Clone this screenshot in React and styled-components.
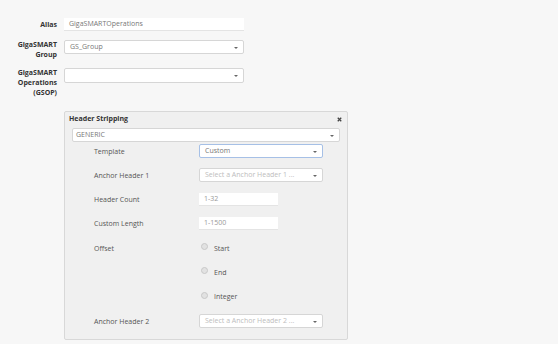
import React from "react";
import styled, { createGlobalStyle } from "styled-components";

const Global = createGlobalStyle`
  html, body { margin: 0; padding: 0; background: #f7f7f7; }
  body { font-family: "Open Sans", "Liberation Sans", sans-serif; font-size: 7px; color: #555; }
`;

const Page = styled.div`
  width: 558px;
  height: 344px;
  padding-top: 18px;
  box-sizing: border-box;
  overflow: hidden;
`;

const TopRow = styled.div`
  display: flex;
  align-items: flex-start;
  margin-bottom: ${(p) => p.$mb || 0}px;
`;

const TopLabel = styled.div`
  width: 40px;
  margin-left: 17px;
  margin-right: 7px;
  text-align: right;
  font-weight: 700;
  color: #333;
  line-height: ${(p) => p.$lh || 10}px;
`;

const TextInput = styled.div`
  width: ${(p) => p.$w}px;
  height: ${(p) => p.$h || 13}px;
  box-sizing: border-box;
  background: #fff;
  border-bottom: 1px solid #e4e4e4;
  padding-left: 5px;
  line-height: ${(p) => (p.$h || 13) - 1}px;
  color: ${(p) => (p.$muted ? "#999" : "#777")};
  white-space: nowrap;
`;

const SelectBox = styled.div`
  width: ${(p) => p.$w}px;
  height: ${(p) => p.$h || 14}px;
  box-sizing: border-box;
  background: #fff;
  border: 1px solid ${(p) => (p.$focus ? "#a6c0e6" : "#d6d6d6")};
  border-radius: 2px;
  display: flex;
  align-items: center;
  justify-content: space-between;
  padding: 0 5px 0 ${(p) => p.$pl || 4}px;
  color: ${(p) => (p.$placeholder ? "#bdbdbd" : "#777")};
  white-space: nowrap;
  line-height: 12px;
`;

const Caret = styled.span`
  width: 0;
  height: 0;
  border-left: 2px solid transparent;
  border-right: 2px solid transparent;
  border-top: 2px solid #666;
  margin-top: 1px;
`;

const Select = ({ w, h, value, placeholder, focus, pl }) => (
  <SelectBox $w={w} $h={h} $placeholder={!!placeholder} $focus={focus} $pl={pl}>
    <span>{value || placeholder || ""}</span>
    <Caret />
  </SelectBox>
);

const Panel = styled.div`
  margin: 13px 0 0 64px;
  width: 284px;
  box-sizing: border-box;
  background: #f0f0f0;
  border: 1px solid #d8d8d8;
  border-radius: 2px;
  padding: 2px 2px 11px;
`;

const PanelHeader = styled.div`
  display: flex;
  justify-content: space-between;
  align-items: center;
  padding: 0 3px 0 2px;
  line-height: 10px;
  font-weight: 700;
  color: #333;
`;

const Close = styled.svg`
  width: 5px;
  height: 5px;
  display: block;
`;

const GenericWrap = styled.div`
  margin: 4px 5px 0;
`;

const Form = styled.div`
  display: flex;
  flex-direction: column;
  gap: 10.3px;
  margin-top: 2px;
`;

const Row = styled.div`
  display: flex;
  align-items: center;
  min-height: 14px;
`;

const FieldLabel = styled.div`
  width: 105px;
  margin-left: 27px;
  color: #555;
`;

const RadioOpt = styled.div`
  display: flex;
  align-items: center;
  gap: 6px;
  padding-left: 2px;
  color: #555;
`;

const RadioDot = styled.span`
  width: 5px;
  height: 5px;
  border-radius: 50%;
  background: #e2e2e2;
  border: 0.5px solid #c8c8c8;
  margin-top: -3px;
`;

const Radio = ({ label }) => (
  <RadioOpt>
    <RadioDot />
    <span>{label}</span>
  </RadioOpt>
);

export default function App() {
  return (
    <Page>
      <Global />
      <TopRow $mb={9}>
        <TopLabel $lh={13}>Alias</TopLabel>
        <TextInput $w={180} $h={13}>GigaSMARTOperations</TextInput>
      </TopRow>
      <TopRow $mb={8}>
        <TopLabel>GigaSMART Group</TopLabel>
        <Select w={180} value="GS_Group" pl={5} />
      </TopRow>
      <TopRow>
        <TopLabel>GigaSMART Operations (GSOP)</TopLabel>
        <Select w={180} h={15} />
      </TopRow>
      <Panel>
        <PanelHeader>
          <span>Header Stripping</span>
          <Close viewBox="0 0 10 10">
            <path d="M1.5 1.5 L8.5 8.5 M8.5 1.5 L1.5 8.5" stroke="#444" strokeWidth="2.6" />
          </Close>
        </PanelHeader>
        <GenericWrap>
          <Select w={268} value="GENERIC" pl={3} />
        </GenericWrap>
        <Form>
          <Row>
            <FieldLabel>Template</FieldLabel>
            <Select w={124} value="Custom" focus pl={5} />
          </Row>
          <Row>
            <FieldLabel>Anchor Header 1</FieldLabel>
            <Select w={124} placeholder="Select a Anchor Header 1 ..." pl={5} />
          </Row>
          <Row>
            <FieldLabel>Header Count</FieldLabel>
            <TextInput $w={79} $muted>1-32</TextInput>
          </Row>
          <Row>
            <FieldLabel>Custom Length</FieldLabel>
            <TextInput $w={79} $muted>1-1500</TextInput>
          </Row>
          <Row>
            <FieldLabel>Offset</FieldLabel>
            <Radio label="Start" />
          </Row>
          <Row>
            <FieldLabel />
            <Radio label="End" />
          </Row>
          <Row>
            <FieldLabel />
            <Radio label="Integer" />
          </Row>
          <Row>
            <FieldLabel>Anchor Header 2</FieldLabel>
            <Select w={124} placeholder="Select a Anchor Header 2 ..." pl={5} />
          </Row>
        </Form>
      </Panel>
    </Page>
  );
}
